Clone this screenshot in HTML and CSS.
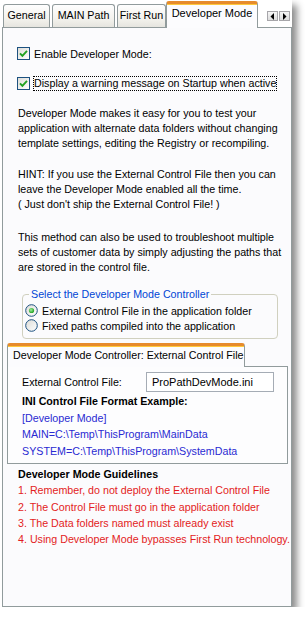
FILE: index.html
```html
<!DOCTYPE html>
<html>
<head>
<meta charset="utf-8">
<link rel="stylesheet" href="styles.css">
</head>
<body>
<div class="window">
  <div class="tabstrip">
    <div class="tab t-general">General</div>
    <div class="tab t-main">MAIN Path</div>
    <div class="tab t-first">First Run</div>
    <div class="tab t-dev selected">Developer Mode</div>
    <div class="scroller">
      <span class="sbtn"><svg width="5" height="7" viewBox="0 0 5 7"><path d="M4 0 L0.5 3.5 L4 7 Z" fill="#000"/></svg></span>
      <span class="sbtn"><svg width="5" height="7" viewBox="0 0 5 7"><path d="M1 0 L4.5 3.5 L1 7 Z" fill="#000"/></svg></span>
    </div>
  </div>
  <div class="panel">
    <div class="check row1">
      <svg class="cb" width="13" height="13" viewBox="0 0 13 13"><defs><linearGradient id="cbg" x1="0" y1="0" x2="1" y2="1"><stop offset="0" stop-color="#dcdcd7"/><stop offset="1" stop-color="#ffffff"/></linearGradient></defs><rect x="0.5" y="0.5" width="12" height="12" fill="url(#cbg)" stroke="#1c5180"/><path d="M3 6.3 L5.4 8.8 L10 3.8" fill="none" stroke="#21a121" stroke-width="1.9"/></svg>
      <span>Enable Developer Mode:</span>
    </div>
    <div class="check row2">
      <svg class="cb" width="13" height="13" viewBox="0 0 13 13"><rect x="0.5" y="0.5" width="12" height="12" fill="url(#cbg)" stroke="#1c5180"/><path d="M3 6.3 L5.4 8.8 L10 3.8" fill="none" stroke="#21a121" stroke-width="1.9"/></svg>
      <span class="focus">Display a warning message on Startup when active</span>
    </div>
    <p class="para p1">Developer Mode makes it easy for you to test your<br>application with alternate data folders without changing<br>template settings, editing the Registry or recompiling.</p>
    <p class="para p2">HINT: If you use the External Control File then you can<br>leave the Developer Mode enabled all the time.<br>( Just don't ship the External Control File! )</p>
    <p class="para p3">This method can also be used to troubleshoot multiple<br>sets of customer data by simply adjusting the paths that<br>are stored in the control file.</p>
    <fieldset class="group">
      <legend>Select the Developer Mode Controller</legend>
      <div class="radio">
        <svg width="13" height="13" viewBox="0 0 13 13"><defs><linearGradient id="rbg" x1="0" y1="0" x2="1" y2="1"><stop offset="0" stop-color="#dcdcd7"/><stop offset="1" stop-color="#ffffff"/></linearGradient><radialGradient id="dot" cx="0.4" cy="0.4" r="0.6"><stop offset="0" stop-color="#9ef09e"/><stop offset="1" stop-color="#21a121"/></radialGradient></defs><circle cx="6.5" cy="6.5" r="5.8" fill="url(#rbg)" stroke="#1c5180" stroke-width="1"/><circle cx="6.5" cy="6.5" r="2.6" fill="url(#dot)"/></svg>
        <span>External Control File in the application folder</span>
      </div>
      <div class="radio">
        <svg width="13" height="13" viewBox="0 0 13 13"><circle cx="6.5" cy="6.5" r="5.8" fill="url(#rbg)" stroke="#1c5180" stroke-width="1"/></svg>
        <span>Fixed paths compiled into the application</span>
      </div>
    </fieldset>
    <div class="subtabs">
      <div class="subtab">Developer Mode Controller: External Control File</div>
    </div>
    <div class="subpanel">
      <div class="filerow">
        <span class="flabel">External Control File:</span>
        <span class="finput">ProPathDevMode.ini</span>
      </div>
      <div class="ini">
        <div class="bold">INI Control File Format Example:</div>
        <div class="blue">[Developer Mode]</div>
        <div class="blue">MAIN=C:\Temp\ThisProgram\MainData</div>
        <div class="blue">SYSTEM=C:\Temp\ThisProgram\SystemData</div>
      </div>
    </div>
    <div class="guides">
      <div class="bold">Developer Mode Guidelines</div>
      <div class="red">1. Remember, do not deploy the External Control File</div>
      <div class="red">2. The Control File must go in the application folder</div>
      <div class="red">3. The Data folders named must already exist</div>
      <div class="red">4. Using Developer Mode bypasses First Run technology.</div>
    </div>
  </div>
</div>
</body>
</html>
```
FILE: styles.css
```css
html, body {
  margin: 0;
  padding: 0;
  background: #ffffff;
}
body {
  font-family: "Liberation Sans", Arial, sans-serif;
  font-size: 10.7px;
  color: #000;
}
.window {
  width: 292px;
  height: 607px;
  background: #ffffff;
  box-shadow: 5px 5px 7px rgba(0, 0, 0, 0.45);
  display: flex;
  flex-direction: column;
  white-space: nowrap;
}
.tabstrip {
  height: 27px;
  flex: none;
  display: flex;
  align-items: flex-end;
  padding-left: 3px;
  box-sizing: border-box;
}
.tab {
  flex: none;
  box-sizing: border-box;
  height: 23px;
  border: 1px solid #919b9c;
  border-bottom: none;
  border-radius: 3px 3px 0 0;
  background: linear-gradient(#fefefe, #f4f3ee 60%, #e6e5df);
  text-align: center;
  line-height: 20px;
  font-size: 10.7px;
  margin-right: 2px;
}
.t-general { width: 47px; }
.t-main { width: 63px; }
.t-first { width: 49px; margin-right: 0; }
.tab.selected {
  width: 92px;
  height: 27px;
  margin-right: 0;
  background: #fcfcfe;
  border-top: 3px solid #e68b2c;
  box-shadow: inset 0 1px 0 #ffc83c;
  line-height: 19px;
  font-size: 11px;
  position: relative;
  z-index: 1;
  margin-bottom: -1px;
}
.scroller {
  align-self: flex-start;
  margin: 11px 2px 0 auto;
  display: flex;
  gap: 1px;
}
.sbtn {
  width: 11px;
  height: 10px;
  box-sizing: border-box;
  border: 1px solid #a7a6aa;
  background: linear-gradient(#f6f6f6, #dcdcdc);
  display: flex;
  align-items: center;
  justify-content: center;
}
.panel {
  flex: 1;
  margin-left: 2px;
  border: 1px solid #919b9c;
  background: #fbfbfd;
  display: flex;
  flex-direction: column;
}
.check {
  display: flex;
  align-items: center;
  height: 13px;
  margin-left: 14px;
  gap: 4px;
}
.row1 { margin-top: 19px; }
.row2 { margin-top: 17px; }
.cb { flex: none; }
.focus {
  outline: 1px dotted #000;
  line-height: 13px;
}
.para {
  margin: 0 0 0 15px;
  line-height: 15px;
}
.p1 { margin-top: 16px; }
.p2 { margin-top: 16px; }
.p3 { margin-top: 18px; }
.group {
  margin: 12px 13px 0 19px;
  padding: 1px 6px 5px 1px;
  border: 1px solid #d0d0bf;
  border-radius: 4px;
}
.group legend {
  color: #0046d5;
  padding: 0 2px;
  margin-left: 5px;
  line-height: 15px;
}
.radio {
  display: flex;
  align-items: center;
  gap: 4px;
  height: 15px;
  margin-left: 1px;
}
.radio svg { flex: none; }
.subtabs {
  margin: 4px 0 0 4px;
  display: flex;
}
.subtab {
  box-sizing: border-box;
  width: 238px;
  height: 24px;
  border: 1px solid #919b9c;
  border-top: 3px solid #e68b2c;
  box-shadow: inset 0 1px 0 #ffc83c;
  border-bottom: none;
  border-radius: 3px 3px 0 0;
  background: #fcfcfe;
  padding-left: 5px;
  line-height: 19px;
  position: relative;
  z-index: 1;
  margin-bottom: -1px;
}
.subpanel {
  margin: 0 3px 0 4px;
  border: 1px solid #919b9c;
  background: #fdfdfe;
  padding: 5px 0 4px 14px;
}
.filerow {
  display: flex;
  align-items: center;
  height: 20px;
}
.flabel {
  width: 124px;
  flex: none;
}
.finput {
  box-sizing: border-box;
  width: 128px;
  height: 20px;
  border: 1px solid #a5acb5;
  background: #fff;
  padding-left: 5px;
  line-height: 18px;
  font-size: 11px;
}
.ini {
  margin-top: 1px;
  line-height: 16.5px;
}
.bold {
  font-weight: bold;
}
.blue { color: #2a2ad2; }
.guides {
  margin: 2px 0 0 15px;
  line-height: 16.25px;
}
.red { color: #e31b23; }
```
